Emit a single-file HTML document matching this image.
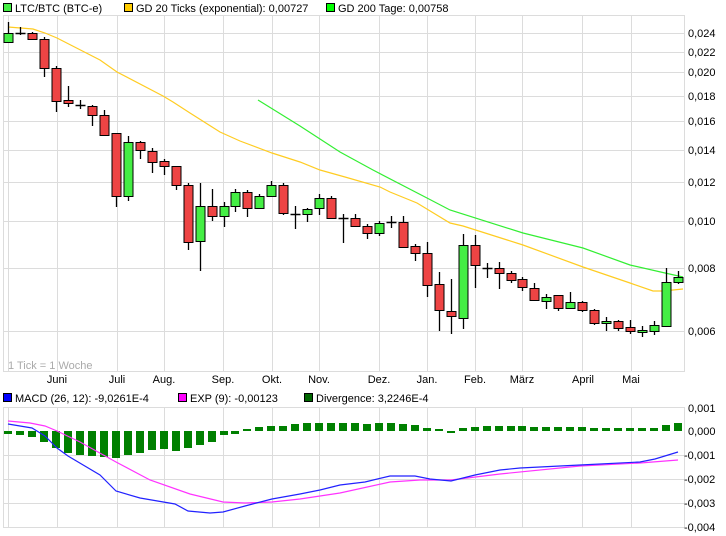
<!DOCTYPE html>
<html><head><meta charset="utf-8"><style>
html,body{margin:0;padding:0;background:#fff;}
svg{display:block;font-family:"Liberation Sans",Arial,sans-serif;}
</style></head><body>
<svg width="726" height="536" viewBox="0 0 726 536" xmlns="http://www.w3.org/2000/svg">
<!-- legend top -->
<g font-size="11" fill="#000">
<rect x="3.5" y="3.5" width="8" height="8" fill="#44ee44" stroke="#000"/><text x="15" y="12">LTC/BTC (BTC-e)</text>
<rect x="124.5" y="3.5" width="8" height="8" fill="#ffcc00" stroke="#000"/><text x="136" y="12">GD 20 Ticks (exponential): 0,00727</text>
<rect x="326.5" y="3.5" width="8" height="8" fill="#00ff00" stroke="#000"/><text x="338" y="12">GD 200 Tage: 0,00758</text>
</g>
<!-- main panel grid -->
<g stroke="#dcdcdc" stroke-width="1">
<line x1="3" y1="15.5" x2="684" y2="15.5"/>
<line x1="3" y1="371.5" x2="684" y2="371.5"/>
<line x1="3.5" y1="15" x2="3.5" y2="372"/>
<line x1="684.5" y1="15" x2="684.5" y2="372"/>
<line x1="3" y1="33.5" x2="684" y2="33.5"/>
<line x1="3" y1="52.5" x2="684" y2="52.5"/>
<line x1="3" y1="72.5" x2="684" y2="72.5"/>
<line x1="3" y1="96.5" x2="684" y2="96.5"/>
<line x1="3" y1="121.5" x2="684" y2="121.5"/>
<line x1="3" y1="150.5" x2="684" y2="150.5"/>
<line x1="3" y1="182.5" x2="684" y2="182.5"/>
<line x1="3" y1="221.5" x2="684" y2="221.5"/>
<line x1="3" y1="268.5" x2="684" y2="268.5"/>
<line x1="3" y1="331.5" x2="684" y2="331.5"/>
<g>
<line x1="8.5" y1="15" x2="8.5" y2="372"/><line x1="57.5" y1="15" x2="57.5" y2="372"/>
<line x1="117.5" y1="15" x2="117.5" y2="372"/><line x1="164.5" y1="15" x2="164.5" y2="372"/>
<line x1="223.5" y1="15" x2="223.5" y2="372"/><line x1="272.5" y1="15" x2="272.5" y2="372"/>
<line x1="319.5" y1="15" x2="319.5" y2="372"/><line x1="379.5" y1="15" x2="379.5" y2="372"/>
<line x1="427.5" y1="15" x2="427.5" y2="372"/><line x1="475.5" y1="15" x2="475.5" y2="372"/>
<line x1="522.5" y1="15" x2="522.5" y2="372"/><line x1="582.5" y1="15" x2="582.5" y2="372"/>
<line x1="631.5" y1="15" x2="631.5" y2="372"/>
</g>
</g>
<!-- right axis -->
<g font-size="11" fill="#000">
<text x="688" y="37">0,024</text><text x="688" y="56">0,022</text><text x="688" y="76">0,020</text>
<text x="688" y="100">0,018</text><text x="688" y="125">0,016</text><text x="688" y="154">0,014</text>
<text x="688" y="186">0,012</text><text x="688" y="225">0,010</text><text x="688" y="272">0,008</text>
<text x="688" y="335">0,006</text>
</g>
<text x="8" y="369" font-size="11" fill="#aaa">1 Tick = 1 Woche</text>
<g font-size="11" fill="#000" text-anchor="middle">
<text x="57" y="383">Juni</text><text x="117" y="383">Juli</text><text x="164" y="383">Aug.</text>
<text x="223" y="383">Sep.</text><text x="272" y="383">Okt.</text><text x="319" y="383">Nov.</text>
<text x="379" y="383">Dez.</text><text x="427" y="383">Jan.</text><text x="475" y="383">Feb.</text>
<text x="522" y="383">März</text><text x="583" y="383">April</text><text x="631" y="383">Mai</text>
</g>
<!-- moving averages -->
<polyline fill="none" stroke="#ffcc22" stroke-width="1.2" points="8,27 33,29 45,33 57,38 100,60 117,72 163,96 173,102 190,113 220,132 240,141 272,153 300,162 320,170 345,177 380,187 390,192 417,203 450,223 463,226 523,245 583,267 630,283 653,291 663,291 683,289"/>
<polyline fill="none" stroke="#33ee33" stroke-width="1.2" points="258,100 300,126 340,152 373,170 427,198 450,210 523,233 583,248 630,265 665,273 683,277"/>
<!-- candles -->
<g stroke="#000" stroke-width="1" id="c">
</g>
<!-- lower legend -->
<g font-size="11" fill="#000">
<rect x="3.5" y="393.5" width="8" height="8" fill="#0000ff" stroke="#000"/><text x="15" y="402">MACD (26, 12): -9,0261E-4</text>
<rect x="178.5" y="393.5" width="8" height="8" fill="#ff00ff" stroke="#000"/><text x="190" y="402">EXP (9): -0,00123</text>
<rect x="304.5" y="393.5" width="8" height="8" fill="#006600" stroke="#000"/><text x="316" y="402">Divergence: 3,2246E-4</text>
</g>
<g stroke="#dcdcdc">
<line x1="3" y1="407.5" x2="684" y2="407.5"/><line x1="3" y1="455.5" x2="684" y2="455.5"/>
<line x1="3" y1="479.5" x2="684" y2="479.5"/><line x1="3" y1="503.5" x2="684" y2="503.5"/>
<line x1="3" y1="527.5" x2="684" y2="527.5"/>
<line x1="3.5" y1="407" x2="3.5" y2="528"/><line x1="684.5" y1="407" x2="684.5" y2="528"/>
<line x1="8.5" y1="407" x2="8.5" y2="528"/><line x1="57.5" y1="407" x2="57.5" y2="528"/>
<line x1="117.5" y1="407" x2="117.5" y2="528"/><line x1="164.5" y1="407" x2="164.5" y2="528"/>
<line x1="223.5" y1="407" x2="223.5" y2="528"/><line x1="272.5" y1="407" x2="272.5" y2="528"/>
<line x1="319.5" y1="407" x2="319.5" y2="528"/><line x1="379.5" y1="407" x2="379.5" y2="528"/>
<line x1="427.5" y1="407" x2="427.5" y2="528"/><line x1="475.5" y1="407" x2="475.5" y2="528"/>
<line x1="522.5" y1="407" x2="522.5" y2="528"/><line x1="582.5" y1="407" x2="582.5" y2="528"/>
<line x1="631.5" y1="407" x2="631.5" y2="528"/>
</g>
<g font-size="11" fill="#000">
<text x="688" y="412">0,001</text><text x="688" y="435">0,000</text><text x="684" y="459">-0,001</text>
<text x="684" y="483">-0,002</text><text x="684" y="507">-0,003</text><text x="684" y="531">-0,004</text>
</g>
<g fill="#008000" id="d"></g>
<polyline fill="none" stroke="#ff33ff" stroke-width="1.2" points="8,421 30,423 45,426 57,431 80,442 116,462 150,480 190,494 223,502 245,503 272,502 300,499 340,493 390,482 420,480 451,480 500,474 580,466 640,463 678,460"/>
<polyline fill="none" stroke="#2222ff" stroke-width="1.2" points="8,424 32,428 45,436 57,448 68,456 100,475 116,491 140,498 175,504 188,511 210,513 223,512 245,506 272,499 300,494 320,490 340,485 365,482 390,476 415,476 430,479 451,481 475,475 500,470 520,468 580,465 640,462 655,459 678,452"/>
<script>
var C=[[8,'g',33,42,22,43],[20,'d',33,33,27,35],[32,'r',33,39,32,39],[44,'r',39,68,37,77],[56,'r',68,101,66,112],[68,'r',100,103,86,107],[80,'d',105,105,100,109],[92,'r',106,115,105,126],[104,'r',115,135,110,135],[116,'r',133,196,133,207],[128,'g',142,196,136,201],[140,'r',142,150,141,159],[152,'r',151,162,148,173],[164,'r',161,166,159,175],[176,'r',166,185,166,190],[188,'r',185,242,183,250],[200,'g',206,241,183,271],[212,'r',206,216,189,221],[224,'g',206,216,202,227],[235,'g',192,206,189,212],[247,'r',192,208,190,217],[259,'g',196,208,194,208],[271,'g',185,196,181,196],[283,'r',185,213,183,215],[295,'d',214,214,206,229],[307,'g',209,214,208,222],[319,'g',198,208,194,215],[331,'r',198,218,196,218],[343,'d',218,218,214,243],[355,'r',218,226,214,226],[367,'r',226,233,224,239],[379,'g',223,233,221,236],[391,'d',222,222,216,228],[403,'r',222,247,216,247],[415,'r',246,253,244,261],[427,'r',253,285,242,297],[439,'r',284,310,272,331],[451,'r',311,316,279,334],[463,'g',245,318,234,329],[475,'r',245,265,235,288],[487,'d',268,268,263,278],[499,'r',268,273,262,289],[511,'r',273,280,271,283],[522,'r',279,287,277,291],[534,'r',288,300,283,301],[546,'g',297,301,294,309],[558,'r',295,308,295,311],[570,'g',302,308,292,309],[582,'r',302,310,301,312],[594,'r',310,323,309,325],[606,'g',321,323,317,331],[618,'r',321,328,320,331],[630,'r',327,331,320,334],[642,'g',330,332,326,337],[654,'g',325,331,321,335],[666,'g',282,326,268,326],[678,'g',277,282,271,284]];
var ns='http://www.w3.org/2000/svg',g=document.getElementById('c');
function el(t,a,p){var e=document.createElementNS(ns,t);for(var k in a)e.setAttribute(k,a[k]);p.appendChild(e);return e;}
C.forEach(function(c){var x=c[0]+0.5;el('line',{x1:x,x2:x,y1:c[4],y2:c[5],'stroke-width':1.3},g);
if(c[1]=='d'){el('line',{x1:x-5,x2:x+5,y1:c[2]+0.5,y2:c[2]+0.5,'stroke-width':1.5},g);}
else{el('rect',{x:x-4.5,y:c[2]+0.5,width:9,height:Math.max(c[3]-c[2],1),fill:c[1]=='g'?'#44ee44':'#ee4444'},g);}});
var D=[434,435,437,442,448,453,455,456,457,458,455,453,450,449,451,448,445,442,435,434,430,427,426,426,424,423,423,423,423,423,424,423,423,424,425,428,430,433,428,427,426,426,426,426,427,427,427,427,427,428,428,428,428,428,428,425,423];
var dg=document.getElementById('d');
D.forEach(function(v,i){var x=C[i][0];var y0=Math.min(v,431),y1=Math.max(v,431);if(y1-y0<2){y0=429;y1=431;}el('rect',{x:x-4,y:y0,width:8,height:y1-y0},dg);});
</script>
</svg>
</body></html>
